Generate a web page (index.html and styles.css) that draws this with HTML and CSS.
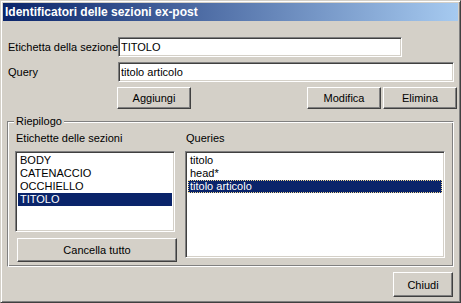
FILE: index.html
```html
<!DOCTYPE html>
<html lang="it">
<head>
    <meta charset="UTF-8">
    <title>Identificatori delle sezioni ex-post</title>
    <link rel="stylesheet" href="styles.css">
</head>
<body>

    <div class="window">
        <div class="titlebar">Identificatori delle sezioni ex-post</div>

        <div class="content">
            <div class="form">
                <label class="label">Etichetta della sezione</label>
                <input class="field field-short" type="text" value="TITOLO">
                <label class="label">Query</label>
                <input class="field field-long" type="text" value="titolo articolo">
            </div>

            <div class="btn-row">
                <button class="btn">Aggiungi</button>
                <div class="spacer"></div>
                <button class="btn">Modifica</button>
                <button class="btn">Elimina</button>
            </div>

            <div class="group">
                <span class="legend">Riepilogo</span>
                <div class="group-col left-col">
                    <div class="col-label">Etichette delle sezioni</div>
                    <ul class="listbox list-sections">
                        <li>BODY</li>
                        <li>CATENACCIO</li>
                        <li>OCCHIELLO</li>
                        <li class="selected">TITOLO</li>
                    </ul>
                    <button class="btn btn-clear">Cancella tutto</button>
                </div>
                <div class="group-col">
                    <div class="col-label">Queries</div>
                    <ul class="listbox list-queries">
                        <li>titolo</li>
                        <li>head*</li>
                        <li class="selected focused">titolo articolo</li>
                    </ul>
                </div>
            </div>

            <div class="footer-row">
                <button class="btn btn-close">Chiudi</button>
            </div>
        </div>
    </div>

</body>
</html>
```

FILE: styles.css
```css
body {
    margin: 0;
    padding: 0;
    background-color: #d4d0c8;
    font-family: 'Liberation Sans', Arial, sans-serif;
    font-size: 11px;
    color: #000;
}

.window {
    width: 461px;
    height: 303px;
    box-sizing: border-box;
    background-color: #d4d0c8;
    border: 1px solid;
    border-color: #d4d0c8 #404040 #404040 #d4d0c8;
    box-shadow: inset 1px 1px #fff, inset -1px -1px #808080;
    padding: 2px;
}

.titlebar {
    height: 18px;
    line-height: 18px;
    padding-left: 2px;
    background: linear-gradient(to right, #0a246a, #a6caf0);
    color: #fff;
    font-weight: bold;
    font-size: 12px;
    white-space: nowrap;
}

.content {
    padding: 16px 1px 0 5px;
}

.form {
    display: grid;
    grid-template-columns: 110px auto;
    row-gap: 5px;
    align-items: center;
}

.label {
    line-height: 13px;
    white-space: nowrap;
}

.field {
    height: 20px;
    box-sizing: border-box;
    margin: 0;
    padding: 0 2px;
    background-color: #fff;
    border: 1px solid;
    border-color: #808080 #fff #fff #808080;
    box-shadow: inset 1px 1px #404040, inset -1px -1px #d4d0c8;
    font-family: 'Liberation Sans', Arial, sans-serif;
    font-size: 11px;
    color: #000;
    outline: none;
}

.field-short {
    width: 284px;
}

.field-long {
    width: 336px;
}

.btn-row {
    display: flex;
    gap: 2px;
    margin-top: 5px;
    margin-left: 109px;
}

.spacer {
    flex: 1;
}

.btn {
    width: 74px;
    height: 22px;
    box-sizing: border-box;
    margin: 0;
    padding: 0;
    background-color: #d4d0c8;
    border: 1px solid;
    border-color: #fff #404040 #404040 #fff;
    box-shadow: inset -1px -1px #808080;
    font-family: 'Liberation Sans', Arial, sans-serif;
    font-size: 11px;
    color: #000;
}

.group {
    position: relative;
    display: flex;
    gap: 8px;
    width: 447px;
    height: 146px;
    box-sizing: border-box;
    margin-top: 12px;
    margin-left: -1px;
    padding: 10px 0 0 7px;
    border: 1px solid;
    border-color: #808080 #fff #fff #808080;
    box-shadow: inset 1px 1px #fff, inset -1px -1px #808080;
}

.legend {
    position: absolute;
    top: -7px;
    left: 6px;
    padding: 0 2px 0 2px;
    line-height: 13px;
    background-color: #d4d0c8;
}

.group-col {
    display: flex;
    flex-direction: column;
}

.left-col {
    width: 162px;
}

.col-label {
    line-height: 13px;
    padding-left: 1px;
    margin-bottom: 6px;
}

.listbox {
    list-style: none;
    margin: 0;
    padding: 0;
    box-sizing: border-box;
    background-color: #fff;
    border: 1px solid;
    border-color: #808080 #fff #fff #808080;
    box-shadow: inset 1px 1px #404040, inset -1px -1px #d4d0c8;
    padding: 2px 2px 0 2px;
}

.listbox li {
    height: 13px;
    line-height: 13px;
    padding-left: 2px;
    white-space: nowrap;
}

.listbox li.selected {
    background-color: #0a246a;
    color: #fff;
}

.listbox li.focused {
    box-sizing: border-box;
    padding-left: 1px;
    line-height: 11px;
    border: 1px dotted #f0d890;
}

.list-sections {
    width: 160px;
    height: 81px;
}

.list-queries {
    width: 260px;
    height: 107px;
}

.btn-clear {
    width: 160px;
    height: 24px;
    margin-top: 6px;
    margin-left: 2px;
}

.footer-row {
    display: flex;
    justify-content: flex-end;
    margin-top: 5px;
    margin-right: 4px;
}

.btn-close {
    width: 60px;
    height: 25px;
}
```
